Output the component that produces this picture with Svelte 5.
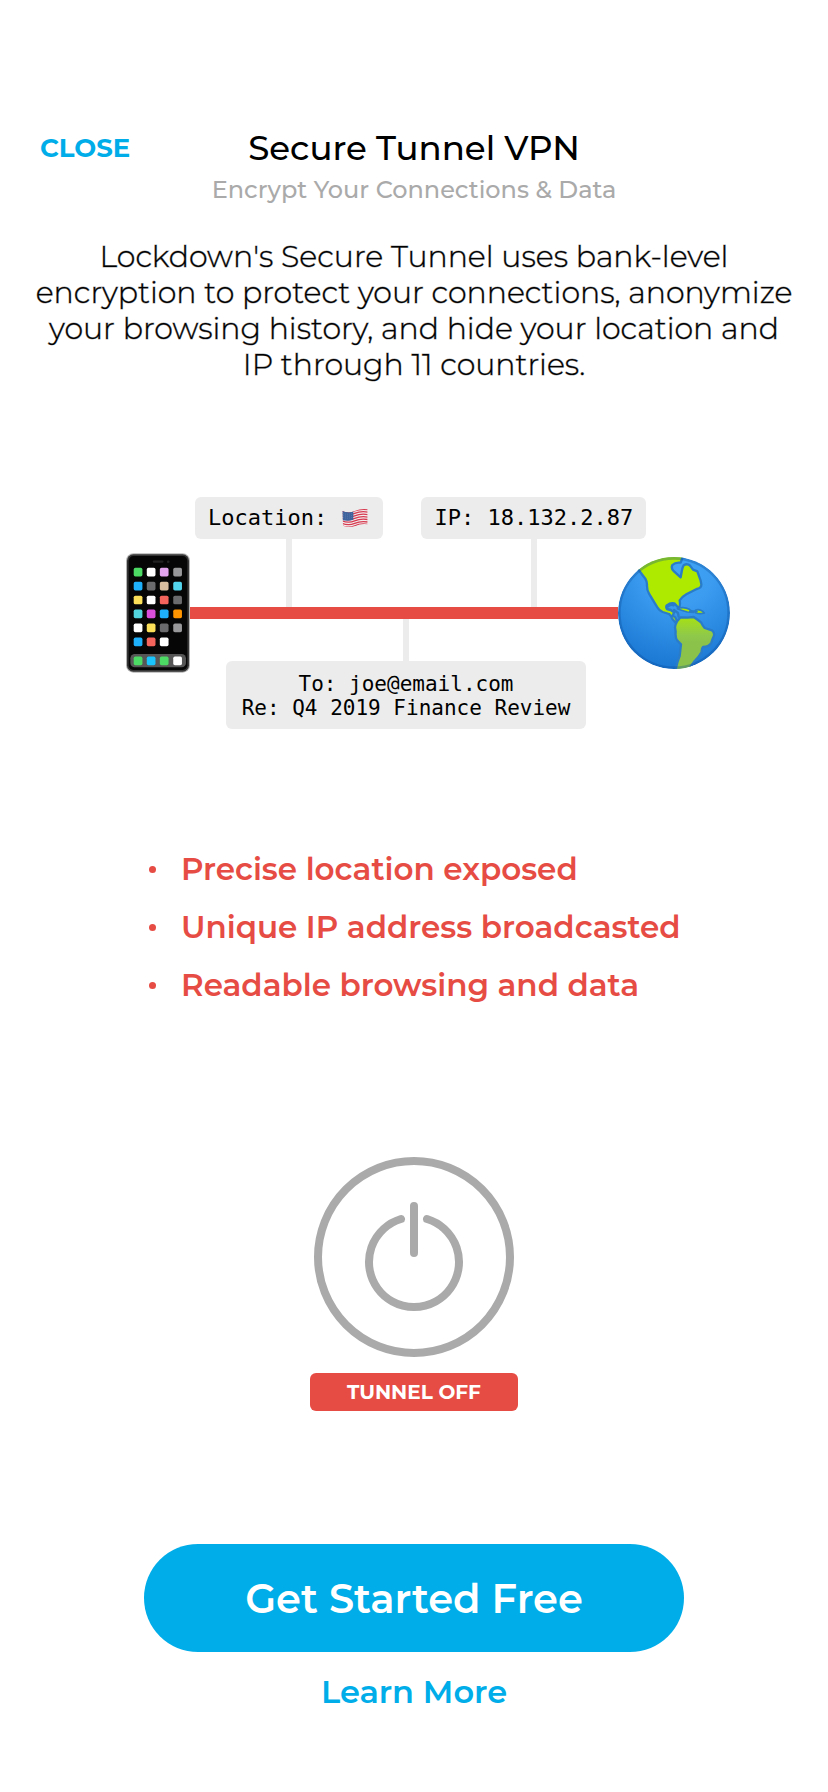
<script>
  const risks = [
    'Precise location exposed',
    'Unique IP address broadcasted',
    'Readable browsing and data',
  ];

  const appRows = [
    ['#4cd964', '#ffffff', '#e3a5ee', '#98989a'],
    ['#1fb0fb', '#6b6b6d', '#d9bf9f', '#54d5ee'],
    ['#fbdf58', '#ffffff', '#f5635d', '#6b6b6d'],
    ['#52d5dc', '#d94fdc', '#1fb0fb', '#ff9500'],
    ['#ffffff', '#fbdf58', '#6b6b6d', '#98989a'],
    ['#1fb0fb', '#f5635d', '#ffffff'],
  ];
  const dock = ['#4cd964', '#19c3fb', '#4cd964', '#ffffff'];
  const cols = [72, 111, 150, 190];
</script>

<main class="page">
  <header>
    <button class="close" type="button">CLOSE</button>
    <h1>Secure Tunnel VPN</h1>
  </header>
  <p class="subtitle">Encrypt Your Connections &amp; Data</p>

  <p class="intro">
    Lockdown's Secure Tunnel uses bank-level<br />
    encryption to protect your connections, anonymize<br />
    your browsing history, and hide your location and<br />
    IP through 11 countries.
  </p>

  <section class="diagram" aria-label="Connection">
    <svg class="phone" viewBox="49 41 191 356" aria-hidden="true">
      <rect x="49" y="41" width="191" height="356" rx="22" fill="#b4b4b4" />
      <rect x="52" y="44" width="185" height="350" rx="19" fill="#343434" />
      <rect x="57" y="49" width="175" height="340" rx="14" fill="#060606" />
      <rect x="129" y="62" width="32" height="7" rx="3" fill="#222" />
      <circle cx="175" cy="66" r="4" fill="#222" />
      {#each appRows as row, r}
        {#each row as color, c}
          <rect x={cols[c]} y={84 + r * 41.6} width="26" height="26" rx="5" fill={color} />
        {/each}
      {/each}
      <rect x="62" y="341" width="166" height="40" rx="13" fill="#565656" />
      {#each dock as color, c}
        <rect x={cols[c]} y="349" width="26" height="26" rx="5" fill={color} />
      {/each}
    </svg>

    <div class="above">
      <div class="callout">
        <span class="tag">Location:&nbsp;<svg class="flag" viewBox="0 0 78 54" role="img" aria-label="United States">
            <defs>
              <clipPath id="flag-shape">
                <path d="M1 6Q20 14 38 6Q57-2 77 1V46Q58 43 40 51Q20 57 3 50Z" />
              </clipPath>
            </defs>
            <g clip-path="url(#flag-shape)">
              <rect width="78" height="54" fill="#f4eeee" />
              <g fill="none" stroke="#d63a50" stroke-width="4">
                {#each [0, 1, 2, 3, 4, 5, 6] as i}
                  <path d={`M0 ${6 + i * 7.4}Q20 ${14 + i * 7.4} 38 ${6 + i * 7.4}T78 ${2 + i * 7.4}`} />
                {/each}
              </g>
              <path d="M0 4Q18 13 34 7V32Q18 38 0 33Z" fill="#3e639d" />
              <g fill="none" stroke="#8aa3c6" stroke-width="1.5" stroke-dasharray="2 4">
                <path d="M4 14Q18 18 32 12M4 20Q18 24 32 18M4 26Q18 30 32 24" />
              </g>
            </g>
          </svg></span>
        <i class="stem"></i>
      </div>
      <div class="callout">
        <span class="tag">IP: 18.132.2.87</span>
        <i class="stem"></i>
      </div>
    </div>

    <div class="wire"></div>

    <div class="below">
      <i class="stem"></i>
      <span class="tag message">To: joe@email.com<br />Re: Q4 2019 Finance Review</span>
    </div>

    <svg class="globe" viewBox="54 50 336 336" aria-hidden="true">
      <defs>
        <radialGradient id="sea" gradientUnits="userSpaceOnUse" cx="235" cy="90" r="300">
          <stop offset="0" stop-color="#42a5f5" />
          <stop offset=".35" stop-color="#3b9cf0" />
          <stop offset="1" stop-color="#1976d2" />
        </radialGradient>
        <linearGradient id="land" gradientUnits="userSpaceOnUse" x1="0" y1="225" x2="0" y2="305">
          <stop offset="0" stop-color="#a9e30e" />
          <stop offset=".75" stop-color="#8fc94a" />
          <stop offset="1" stop-color="#8bc34a" />
        </linearGradient>
        <clipPath id="globe-disc"><circle cx="222" cy="218" r="168" /></clipPath>
      </defs>
      <g clip-path="url(#globe-disc)">
        <circle cx="222" cy="218" r="168" fill="url(#sea)" />
        <g stroke="#2a7cc9" stroke-width="7" stroke-linejoin="round" stroke-linecap="round">
          <path
            fill="#aeea00"
            d="M112 84L136 115Q140 122 141 132Q140 148 147 160L172 201Q178 211 188 215L207 221Q214 226 217 236L227 247L231 241L225 230L218 227L222 216L212 209L201 206Q196 199 202 194Q211 186 223 189L236 203Q242 198 239 180Q247 169 259 162L290 146Q305 143 304 132L302 121L292 93L279 88L270 76Q262 68 251 75Q247 82 246 89L242 111L222 93Q212 84 217 74Q226 65 242 67L252 40L110 40Z"
          />
          <path
            fill="url(#land)"
            d="M232 242L242 231L263 232L281 230L294 239L303 246Q309 258 314 263L336 270Q344 276 342 286Q337 296 334 307Q329 318 309 320Q304 325 305 335Q297 349 284 362L263 392H226Q231 365 239 347L243 312L232 301Q225 292 227 274L225 261Q226 252 232 242Z"
          />
          <path fill="#aeea00" stroke-width="5" d="M232 205Q252 198 268 207L281 216L262 215Q246 211 232 205Z" />
          <path fill="#aeea00" stroke-width="5" d="M287 209Q302 205 313 218Q300 222 286 217Z" />
          <path fill="none" d="M203 199Q211 190 221 195M222 209L234 218L236 229M270 213H290" />
        </g>
        <circle cx="222" cy="218" r="164" fill="none" stroke="#0d4b94" stroke-opacity=".32" stroke-width="8" />
      </g>
    </svg>
  </section>

  <ul class="risks">
    {#each risks as risk}
      <li>{risk}</li>
    {/each}
  </ul>

  <button class="power" type="button" aria-label="Turn tunnel on">
    <svg viewBox="0 0 200 200" fill="none" stroke="#aaaaaa" stroke-width="8" stroke-linecap="round" aria-hidden="true">
      <circle cx="100" cy="100" r="96" />
      <path d="M100 49V96M87 62A45 45 0 1 0 113 62" />
    </svg>
  </button>
  <p class="status">TUNNEL OFF</p>

  <button class="primary" type="button">Get Started Free</button>
  <button class="link" type="button">Learn More</button>
</main>

<style>
  :global(body) {
    background: #ffffff;
  }

  .page {
    box-sizing: border-box;
    min-height: 100vh;
    padding: 126px 32px 80px;
    display: flex;
    flex-direction: column;
    align-items: center;
    color: #000000;
    font-family: Montserrat, Inter, sans-serif;
  }

  h1,
  p,
  ul {
    margin: 0;
    padding: 0;
  }

  button {
    padding: 0;
    border: 0;
    background: none;
    font-family: inherit;
    cursor: pointer;
  }

  header {
    align-self: stretch;
    display: grid;
    grid-template-columns: 1fr auto 1fr;
    align-items: center;
  }

  .close {
    justify-self: start;
    padding-left: 8px;
    color: #00ade9;
    font-size: 26px;
    font-weight: 700;
    line-height: 44px;
  }

  h1 {
    font-size: 34px;
    font-weight: 500;
    line-height: 44px;
  }

  .subtitle {
    margin-top: 4px;
    color: #aaaaaa;
    font-size: 24px;
    font-weight: 500;
    line-height: 32px;
  }

  .intro {
    margin-top: 33px;
    font-size: 30px;
    font-weight: 300;
    line-height: 36px;
    text-align: center;
    white-space: nowrap;
    -webkit-text-stroke: 1px rgba(0, 0, 0, 0.4);
  }

  .diagram {
    box-sizing: border-box;
    width: 100%;
    max-width: 632px;
    margin-top: 114px;
    padding-left: 28px;
    display: grid;
    grid-template-columns: 64px 1fr 112px;
    grid-template-rows: 110px 12px 110px;
  }

  .phone {
    grid-area: 1 / 1 / 4 / 2;
    align-self: center;
    width: 64px;
    height: 120px;
  }

  .globe {
    grid-area: 1 / 3 / 4 / 4;
    align-self: center;
    width: 112px;
    height: 112px;
  }

  .above {
    grid-area: 1 / 2 / 2 / 4;
    padding-left: 5px;
    display: flex;
    gap: 38px;
  }

  .wire {
    grid-area: 2 / 2 / 3 / 3;
    background: #e74c44;
  }

  .below {
    grid-area: 3 / 2 / 4 / 3;
    padding-left: 4px;
  }

  .callout,
  .below {
    display: flex;
    flex-direction: column;
    align-items: center;
  }

  .stem {
    flex: 1;
    width: 6px;
    background: #ececec;
  }

  .tag {
    display: flex;
    align-items: center;
    padding: 0 13px;
    border-radius: 6px;
    background: #ececec;
    font-family: "DejaVu Sans Mono", monospace;
    font-size: 22px;
    line-height: 42px;
    white-space: nowrap;
  }

  .message {
    display: block;
    padding: 11px 16px 9px;
    font-size: 21px;
    line-height: 24px;
    text-align: center;
  }

  .flag {
    width: 26px;
    height: 18px;
    margin: 0 2px;
  }

  .risks {
    width: 100%;
    max-width: 530px;
    margin-top: 122px;
    display: flex;
    flex-direction: column;
    gap: 22px;
    list-style: none;
  }

  .risks li {
    display: flex;
    align-items: center;
    gap: 25px;
    color: #e74c44;
    font-size: 31px;
    font-weight: 600;
    line-height: 36px;
    white-space: nowrap;
  }

  .risks li::before {
    content: "";
    flex: none;
    width: 7px;
    height: 7px;
    border-radius: 50%;
    background: currentColor;
  }

  .power {
    margin-top: 154px;
    border-radius: 50%;
  }

  .power svg {
    display: block;
    width: 200px;
    height: 200px;
  }

  .status {
    width: 208px;
    margin-top: 16px;
    border-radius: 6px;
    background: #e74c44;
    color: #ffffff;
    font-size: 20px;
    font-weight: 700;
    line-height: 38px;
    text-align: center;
  }

  .primary {
    width: 100%;
    max-width: 540px;
    margin-top: 133px;
    padding-top: 2px;
    border-radius: 54px;
    background: #00ade9;
    color: #ffffff;
    font-size: 40px;
    font-weight: 600;
    line-height: 106px;
  }

  .link {
    margin-top: 20px;
    color: #00ade9;
    font-size: 32px;
    font-weight: 600;
    line-height: 40px;
  }
</style>
